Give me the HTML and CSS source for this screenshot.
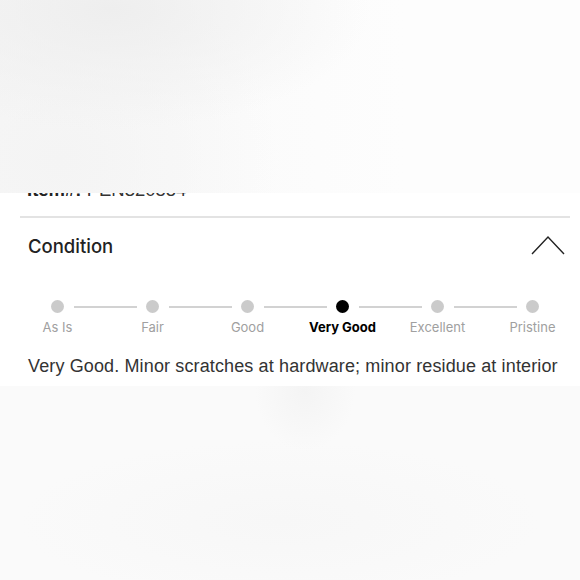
FILE: index.html
```html
<!DOCTYPE html>
<html lang="en">
<head>
<meta charset="utf-8">
<title>Condition</title>
<link rel="stylesheet" href="styles.css">
</head>
<body>
<div class="screen">
  <div class="photo-top" aria-hidden="true"></div>
  <div class="item-id"><b>Item#:</b> PEN320584</div>
  <section class="accordion">
    <div class="acc-head">
      <h2 class="acc-title">Condition</h2>
      <svg class="chevron" width="34" height="20" viewBox="0 0 34 20"><path d="M1 19 L17 2 L33 19" fill="none" stroke="#222" stroke-width="1.4"/></svg>
    </div>
    <ol class="stepper">
      <li class="step"><span class="dot"></span><span class="label">As Is</span></li>
      <li class="step"><span class="dot"></span><span class="label">Fair</span></li>
      <li class="step"><span class="dot"></span><span class="label">Good</span></li>
      <li class="step active"><span class="dot"></span><span class="label">Very Good</span></li>
      <li class="step"><span class="dot"></span><span class="label">Excellent</span></li>
      <li class="step"><span class="dot"></span><span class="label">Pristine</span></li>
    </ol>
    <p class="acc-desc">Very Good. Minor scratches at hardware; minor residue at interior</p>
  </section>
  <div class="photo-bottom" aria-hidden="true"></div>
</div>
</body>
</html>
```
FILE: styles.css
```css
html, body { margin: 0; padding: 0; background: #fff; }
body { font-family: Inter, "Liberation Sans", Arial, sans-serif; color: #222; }
.screen { position: relative; width: 580px; height: 580px; overflow: hidden; background: #fff; }

.photo-top {
  position: absolute; left: 0; top: 0; width: 580px; height: 193px; z-index: 2;
  background:
    radial-gradient(ellipse 260px 120px at 110px 10px, #eeeeee 0%, rgba(240,240,240,0) 100%),
    radial-gradient(ellipse 220px 200px at 60px 160px, #f4f4f4 0%, rgba(246,246,246,0) 100%),
    linear-gradient(90deg, #f7f7f7 0%, #fbfbfb 40%, #fdfdfd 70%, #fdfdfd 100%);
}

.item-id { padding: 178px 0 0 27px; font-size: 18.5px; line-height: 24px; color: #333; font-family: "Liberation Sans", Arial, sans-serif; }
.item-id b { font-weight: 700; color: #222; }

.accordion { margin: 14px 10px 0 20px; border-top: 2px solid #e3e3e3; }
.acc-head { display: flex; align-items: center; justify-content: space-between; height: 56px; padding: 0 5px 0 8px; }
.acc-title { margin: 0; font-size: 18.5px; font-weight: 500; color: #222; }
.chevron { display: block; margin-top: -3px; }

.stepper { list-style: none; margin: 26px 0 0 -10px; padding: 0; display: grid; grid-template-columns: repeat(6, 95px); }
.step { position: relative; display: flex; flex-direction: column; align-items: center; gap: 6px; }
.step::after {
  content: ""; position: absolute; top: 6px; left: calc(50% + 16px); width: 63px; height: 2px; background: #d2d2d2;
}
.step:last-child::after { display: none; }
.dot { width: 13px; height: 13px; border-radius: 50%; background: #cbcbcb; }
.label { font-size: 13px; color: #a0a0a0; line-height: 16px; }
.active .dot { background: #000; }
.active .label { color: #000; font-weight: 700; }

.acc-desc { margin: 20px 0 0 8px; font-size: 18px; line-height: 22px; letter-spacing: 0.13px; color: #333; font-weight: 400; font-family: "Liberation Sans", Arial, sans-serif; white-space: nowrap; }

.photo-bottom {
  position: absolute; left: 0; top: 386px; width: 580px; height: 194px;
  background:
    radial-gradient(ellipse 50px 60px at 305px 5px, #f4f4f4 0%, rgba(246,246,246,0) 100%),
    radial-gradient(ellipse 260px 80px at 280px 135px, #f7f7f7 0%, rgba(248,248,248,0) 100%),
    #fafafa;
}
```
